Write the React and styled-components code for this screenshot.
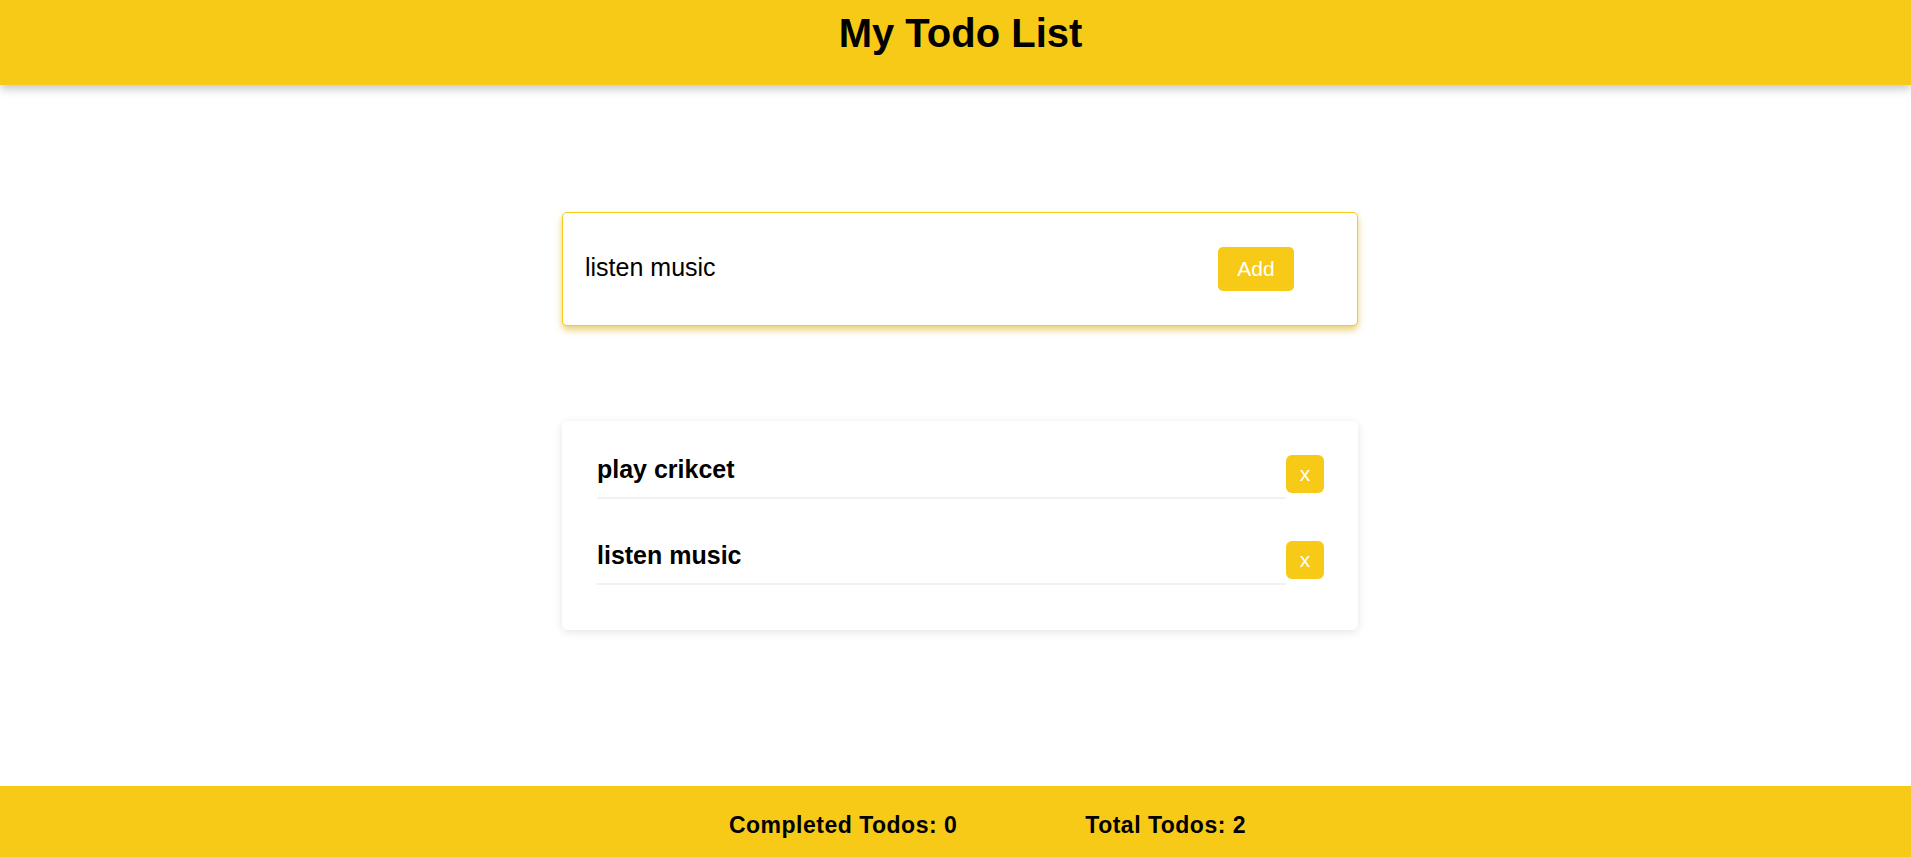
import React, { useState } from 'react';
import styled, { createGlobalStyle } from 'styled-components';

const yellow = '#f7ca18';

const GlobalStyle = createGlobalStyle`
  * { box-sizing: border-box; }
  html, body { margin: 0; padding: 0; }
  body {
    font-family: "Liberation Sans", Arial, Helvetica, sans-serif;
    background: #ffffff;
    color: #000000;
  }
`;

const Page = styled.div`
  min-height: 100vh;
  display: flex;
  flex-direction: column;
`;

const Header = styled.header`
  position: relative;
  z-index: 1;
  height: 85px;
  background: ${yellow};
  box-shadow: 0 4px 9px rgba(0, 0, 0, 0.22);
  display: flex;
  justify-content: center;
  align-items: flex-start;
  padding: 10px 0 0 10px;
`;

const Title = styled.h1`
  margin: 0;
  font-size: 40px;
  line-height: 46px;
  font-weight: 700;
`;

const Main = styled.main`
  flex: 1;
  display: flex;
  flex-direction: column;
  align-items: center;
  padding: 127px 0 40px 9px;
`;

const InputCard = styled.form`
  width: 796px;
  height: 114px;
  border: 1px solid ${yellow};
  border-radius: 5px;
  background: #fff;
  box-shadow: 0 4px 7px rgba(215, 170, 0, 0.55);
  display: flex;
  align-items: center;
  padding: 0 63px 0 22px;
`;

const TextInput = styled.input`
  flex: 1;
  border: none;
  outline: none;
  background: transparent;
  padding: 0;
  margin: 0;
  font-family: inherit;
  font-size: 25px;
  line-height: 29px;
  height: 29px;
  margin-top: -3px;
  color: #000;
`;

const YellowButton = styled.button`
  border: none;
  background: ${yellow};
  color: #ffffff;
  font-family: inherit;
  font-size: 21px;
  border-radius: ${(p) => (p.$small ? '6px' : '5px')};
  width: ${(p) => (p.$small ? '38px' : '76px')};
  height: ${(p) => (p.$small ? '38px' : '44px')};
  padding: 0;
  cursor: pointer;
  flex-shrink: 0;
  display: flex;
  align-items: center;
  justify-content: center;
`;

const ListCard = styled.section`
  margin-top: 95px;
  width: 796px;
  background: #fff;
  border-radius: 6px;
  box-shadow: 0 2px 10px rgba(0, 0, 0, 0.11);
  padding: 34px 34px 45px 35px;
  display: flex;
  flex-direction: column;
  gap: 42px;
`;

const Row = styled.div`
  display: flex;
  align-items: flex-start;
`;

const ItemText = styled.div`
  flex: 1;
  font-size: 25px;
  line-height: 29px;
  font-weight: 700;
  padding: 0 0 13px;
  border-bottom: 2px solid #f1f1f1;
`;

const Footer = styled.footer`
  height: 71px;
  background: ${yellow};
  display: flex;
  justify-content: center;
  align-items: flex-start;
  gap: 128px;
  padding: 26px 0 0 64px;
`;

const Stat = styled.span`
  font-size: 23px;
  line-height: 26px;
  font-weight: 700;
  letter-spacing: 0.5px;
`;

export default function App() {
  const [text, setText] = useState('listen music');
  const [todos, setTodos] = useState([
    { id: 1, title: 'play crikcet', done: false },
    { id: 2, title: 'listen music', done: false },
  ]);

  const add = (e) => {
    e.preventDefault();
    if (!text.trim()) return;
    setTodos((t) => [...t, { id: Date.now(), title: text.trim(), done: false }]);
  };

  const remove = (id) => setTodos((t) => t.filter((x) => x.id !== id));

  const completed = todos.filter((t) => t.done).length;

  return (
    <Page>
      <GlobalStyle />
      <Header>
        <Title>My Todo List</Title>
      </Header>
      <Main>
        <InputCard onSubmit={add}>
          <TextInput value={text} onChange={(e) => setText(e.target.value)} />
          <YellowButton type="submit">Add</YellowButton>
        </InputCard>
        <ListCard>
          {todos.map((t) => (
            <Row key={t.id}>
              <ItemText>{t.title}</ItemText>
              <YellowButton $small type="button" onClick={() => remove(t.id)}>
                x
              </YellowButton>
            </Row>
          ))}
        </ListCard>
      </Main>
      <Footer>
        <Stat>Completed Todos: {completed}</Stat>
        <Stat>Total Todos: {todos.length}</Stat>
      </Footer>
    </Page>
  );
}
